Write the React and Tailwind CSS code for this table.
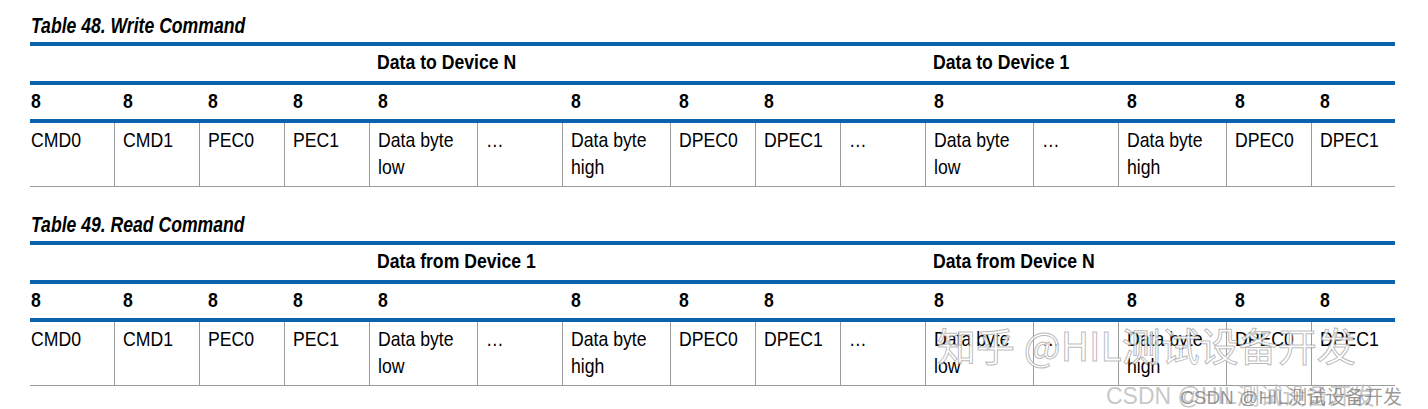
import React from "react";

const GRID =
  "grid grid-cols-[84px_85px_85px_85px_108px_85px_108px_85px_85px_85px_108px_85px_108px_85px_84px]";

const EIGHTS = ["8", "8", "8", "8", "8", "", "8", "8", "8", "", "8", "", "8", "8", "8"];
const CELLS = [
  ["CMD0"],
  ["CMD1"],
  ["PEC0"],
  ["PEC1"],
  ["Data byte", "low"],
  ["…"],
  ["Data byte", "high"],
  ["DPEC0"],
  ["DPEC1"],
  ["…"],
  ["Data byte", "low"],
  ["…"],
  ["Data byte", "high"],
  ["DPEC0"],
  ["DPEC1"],
];

function Bar() {
  return <div className="h-[4px] bg-[#0b63ae]" />;
}

function N({ children }) {
  return (
    <span className="inline-block whitespace-nowrap origin-left scale-x-[0.84]">{children}</span>
  );
}

function CmdTable({ title, left, right, className }) {
  return (
    <section className={className}>
      <h2 className="h-[24px] pl-[31px] mb-[4px] text-[22px] leading-[24px] font-bold italic text-black">
        <span className="inline-block whitespace-nowrap origin-left scale-x-[0.8]">{title}</span>
      </h2>
      <div className="ml-[30px] w-[1365px]">
        <Bar />
        <div className={`${GRID} h-[35px] font-bold text-[21px] leading-[28px] text-black`}>
          <div className="col-span-4" />
          <div className="col-span-5 pl-[8px] pt-[2px]">
            <N>{left}</N>
          </div>
          <div className="col-span-1" />
          <div className="col-span-5 pl-[8px] pt-[2px]">
            <N>{right}</N>
          </div>
        </div>
        <Bar />
        <div className={`${GRID} h-[34px] font-bold text-[21px] leading-[28px] text-black`}>
          {EIGHTS.map((e, i) => (
            <div key={i} className={`${i === 0 ? "pl-[1px]" : "pl-[9px]"} pt-[2px]`}>
              <N>{e}</N>
            </div>
          ))}
        </div>
        <Bar />
        <div className={`${GRID} h-[64px] border-b border-[#9c9c9c] text-[21px] leading-[27px] text-black`}>
          {CELLS.map((lines, i) => (
            <div
              key={i}
              className={`${i === 0 ? "pl-[1px]" : "pl-[8px] border-l border-[#9c9c9c]"} pt-[3px]`}
            >
              {lines.map((l, j) => (
                <div key={j}>
                  <N>{l}</N>
                </div>
              ))}
            </div>
          ))}
        </div>
      </div>
    </section>
  );
}

export default function App() {
  return (
    <div className="relative w-[1428px] h-[409px] overflow-hidden bg-white font-['Liberation_Sans',Arial,sans-serif]">
      <CmdTable
        className="pt-[14px]"
        title="Table 48. Write Command"
        left="Data to Device N"
        right="Data to Device 1"
      />
      <CmdTable
        className="pt-[26px]"
        title="Table 49. Read Command"
        left="Data from Device 1"
        right="Data from Device N"
      />
      <div className="absolute left-[937px] top-[321px] text-[39px] leading-[46px] text-[rgba(255,255,255,0.82)] [-webkit-text-stroke:1px_rgba(140,140,140,0.6)] font-['Noto_Sans_CJK_SC','Liberation_Sans',sans-serif] whitespace-nowrap pointer-events-none">
        知乎 @HIL测试设备开发
      </div>
      <div className="absolute left-[1106px] top-[382px] text-[23px] leading-[28px] text-[rgba(185,185,185,0.8)] font-['Liberation_Sans','Noto_Sans_CJK_SC',sans-serif] whitespace-nowrap pointer-events-none">
        CSDN @HIL测试设备开发
      </div>
      <div className="absolute left-[1180px] top-[386px] text-[19px] leading-[24px] text-[rgba(120,120,120,0.75)] font-['Liberation_Sans','Noto_Sans_CJK_SC',sans-serif] whitespace-nowrap pointer-events-none">
        CSDN @HIL测试设备开发
      </div>
    </div>
  );
}
